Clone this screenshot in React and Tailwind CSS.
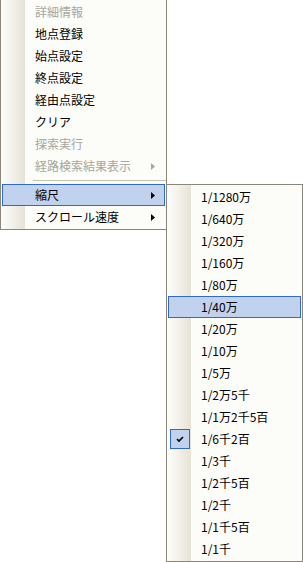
import React from "react";

const mainItems = [
    { label: "詳細情報", disabled: true },
    { label: "地点登録" },
    { label: "始点設定" },
    { label: "終点設定" },
    { label: "経由点設定" },
    { label: "クリア" },
    { label: "探索実行", disabled: true },
    { label: "経路検索結果表示", disabled: true, sub: true },
    { separator: true },
    { label: "縮尺", sub: true, active: true },
    { label: "スクロール速度", sub: true },
];

const scales = [
    "1/1280万",
    "1/640万",
    "1/320万",
    "1/160万",
    "1/80万",
    "1/40万",
    "1/20万",
    "1/10万",
    "1/5万",
    "1/2万5千",
    "1/1万2千5百",
    "1/6千2百",
    "1/3千",
    "1/2千5百",
    "1/2千",
    "1/1千5百",
    "1/1千",
];

function Arrow({ disabled }) {
    return (
        <svg width="4" height="7" viewBox="0 0 4 7" className="shrink-0">
            <polygon points="0,0 4,3.5 0,7" fill={disabled ? "#a6a59d" : "#000"} />
        </svg>
    );
}

function Check() {
    return (
        <div className="absolute left-[1px] top-0 w-[20px] h-[20px] border border-[#316ac5] bg-[#c1d2ee] flex items-center justify-center">
            <svg width="8" height="7" viewBox="0 0 8 7">
                <path d="M1 3 L3 5 L7 1" stroke="#000" strokeWidth="1.6" fill="none" />
            </svg>
        </div>
    );
}

function Row({ label, disabled, sub, active, checked }) {
    return (
        <div
            className={`relative mx-px h-[22px] border flex items-center pl-[32px] pr-[9px] ${
                active ? "border-[#316ac5] bg-[#c1d2ee]" : "border-transparent"
            }`}
        >
            {checked && <Check />}
            <span className={`flex-1 whitespace-nowrap ${disabled ? "text-[#a6a59d]" : "text-black"}`}>{label}</span>
            {sub && <Arrow disabled={disabled} />}
        </div>
    );
}

export default function App() {
    return (
        <div
            className="w-[303px] h-[562px] bg-white flex items-start overflow-hidden text-[12px] leading-[20px]"
            style={{ fontFamily: '"Noto Sans CJK JP", "Liberation Sans", sans-serif' }}
        >
            {/* Main context menu */}
            <div className="w-[167px] border-x border-b border-[#8a867a] pt-px pb-px bg-[linear-gradient(to_right,#fdfdfb_0px,#e6e3d6_24px,#fcfcf9_24px)]">
                {mainItems.map((item, i) =>
                    item.separator ? (
                        <div key={i} className="h-[7px] flex items-center pl-[32px]">
                            <div className="h-px w-full bg-[#c5c2b2]" />
                        </div>
                    ) : (
                        <Row key={i} {...item} />
                    )
                )}
            </div>

            {/* Scale submenu */}
            <div className="w-[137px] -ml-px mt-[184px] border border-[#8a867a] py-px bg-[linear-gradient(to_right,#fdfdfb_0px,#e6e3d6_24px,#fcfcf9_24px)]">
                {scales.map((s, i) => (
                    <Row key={s} label={s} active={i === 5} checked={i === 11} />
                ))}
            </div>
        </div>
    );
}
